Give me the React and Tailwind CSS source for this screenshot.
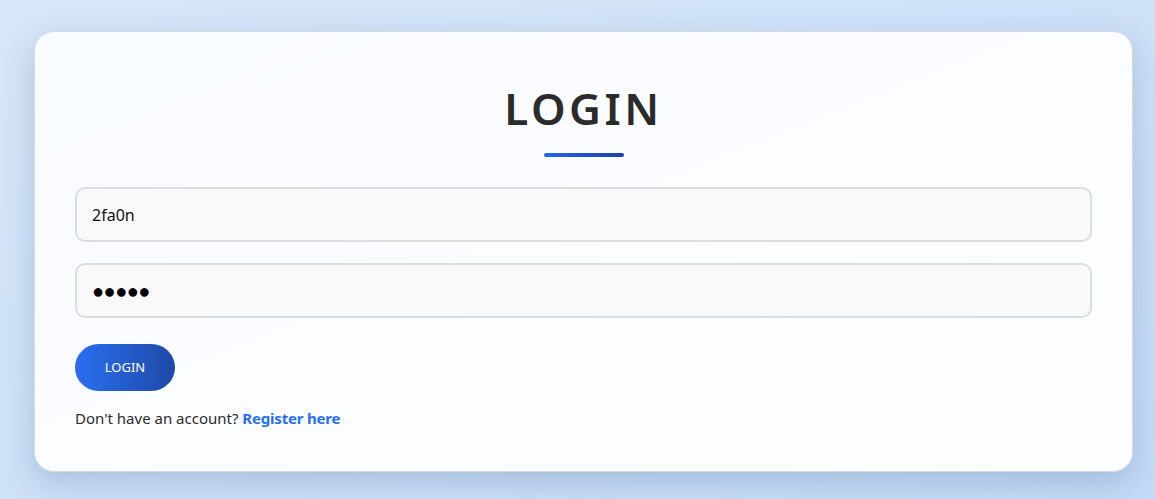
export default function App() {
  return (
    <div className="w-[1155px] h-[499px] overflow-hidden bg-gradient-to-br from-[#d8e7f9] to-[#c3dbf6] pt-[31px] pl-[34px]" style={{ fontFamily: '"Noto Sans", "Open Sans", sans-serif' }}>
      <div className="w-[1099px] h-[441px] rounded-[20px] border border-[#d4dbe4] bg-gradient-to-br from-[#f8fbff] to-[#fdfeff] shadow-[0_10px_30px_rgba(60,90,140,0.25)] px-[40px] pt-[50px]">
        <h1 className="text-center text-[44px] leading-[52px] font-semibold tracking-[3.5px] text-[#2b2b2b]">LOGIN</h1>
        <div className="mx-auto mt-[19px] w-[80px] h-[4px] rounded-full bg-gradient-to-r from-[#2563eb] to-[#1e40af]" />
        <div className="mt-[30px] flex flex-col gap-[21px]">
          <div className="h-[55px] rounded-[10px] border-2 border-[#dddddd] bg-[#f9f9f9] flex items-center px-[15px] text-[16px] text-[#111]">2fa0n</div>
          <div className="h-[55px] rounded-[10px] border-2 border-[#dddddd] bg-[#f9f9f9] flex items-center px-[15px] text-[20px] text-black tracking-[-0.5px]">●●●●●</div>
        </div>
        <button className="mt-[26px] w-[100px] h-[47px] rounded-full bg-gradient-to-r from-[#2a6ff0] to-[#1e4aa8] text-white text-[13px]">LOGIN</button>
        <p className="mt-[16px] text-[15px] text-[#2b2b2b]">Don't have an account? <span className="font-bold text-[#2a6ff0] tracking-[-0.2px]">Register here</span></p>
      </div>
    </div>
  );
}
